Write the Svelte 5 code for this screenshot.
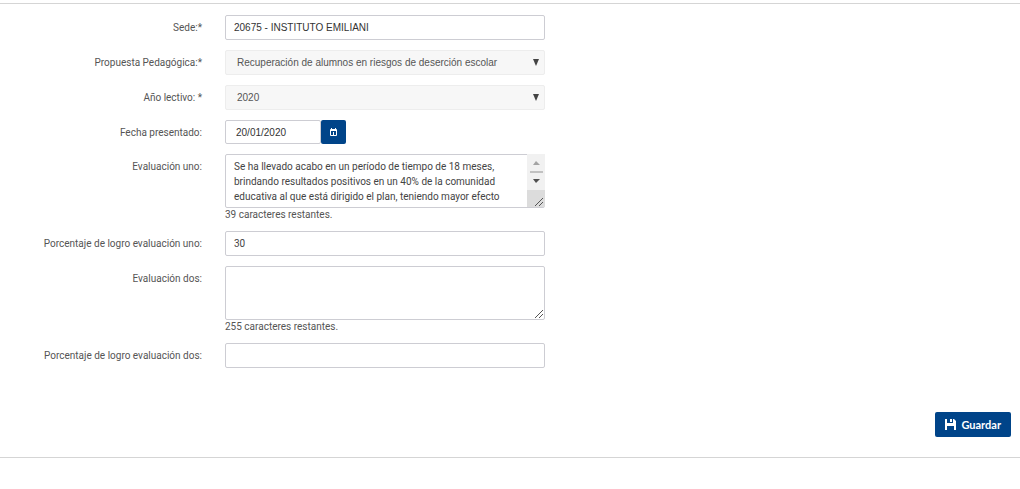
<script lang="ts">
  const MAX_LENGTH = 255;

  let sede = $state('20675 - INSTITUTO EMILIANI');
  let propuesta = $state('Recuperación de alumnos en riesgos de deserción escolar');
  let anio = $state('2020');
  let fecha = $state('20/01/2020');
  let evaluacionUno = $state(
    'Se ha llevado acabo en un período de tiempo de 18 meses, brindando resultados positivos en un 40% de la comunidad educativa al que está dirigido el plan, teniendo mayor efecto sobre los alumnos en riesgo de deserción'
  );
  let porcentajeUno = $state('30');
  let evaluacionDos = $state('');
  let porcentajeDos = $state('');

  let restantesUno = $derived(MAX_LENGTH - evaluacionUno.length);
  let restantesDos = $derived(MAX_LENGTH - evaluacionDos.length);
</script>

<form class="panel" onsubmit={(event) => event.preventDefault()}>
  <div class="fields">
    <label for="sede">Sede:*</label>
    <input id="sede" class="control plain" type="text" bind:value={sede} />

    <label for="propuesta">Propuesta Pedagógica:*</label>
    <div class="select">
      <select id="propuesta" class="control plain" bind:value={propuesta}>
        <option>Recuperación de alumnos en riesgos de deserción escolar</option>
      </select>
      <svg class="arrow" viewBox="0 0 6 7" aria-hidden="true"><path d="M0 0h6L3 7z" /></svg>
    </div>

    <label for="anio">Año lectivo: *</label>
    <div class="select">
      <select id="anio" class="control plain" bind:value={anio}>
        <option>2020</option>
      </select>
      <svg class="arrow" viewBox="0 0 6 7" aria-hidden="true"><path d="M0 0h6L3 7z" /></svg>
    </div>

    <label for="fecha">Fecha presentado:</label>
    <div class="date">
      <input id="fecha" class="control plain" type="text" bind:value={fecha} />
      <button type="button" class="pick" aria-label="Elegir fecha">
        <svg viewBox="0 0 7 8" aria-hidden="true">
          <path
            fill-rule="evenodd"
            d="M1 1V0h1v1h3V0h1v1q1 0 1 1v5q0 1-1 1H1Q0 8 0 7V2q0-1 1-1zM1 3v4h5V3z"
          />
          <path d="M3 4h1v3H3z" />
        </svg>
      </button>
    </div>

    <label for="evaluacion-uno">Evaluación uno:</label>
    <div>
      <div class="area scrolled">
        <textarea
          id="evaluacion-uno"
          class="control"
          maxlength={MAX_LENGTH}
          bind:value={evaluacionUno}
        ></textarea>
        <svg class="scroll" viewBox="0 0 18 54" aria-hidden="true">
          <path fill="#f1f1f1" d="M0 0h18v36H0z" />
          <path fill="#dcdcdc" d="M0 36h18v17H0z" />
          <path fill="#a3a3a3" d="M6 11h7L9 7z" />
          <path fill="#c1c1c1" d="M3 17h13v2H3z" />
          <path fill="#505050" d="M6 25h7l-4 4z" />
        </svg>
        <svg class="grip" viewBox="0 0 9 9" aria-hidden="true">
          <path d="M0 8l8-8M4 8l4-4" />
        </svg>
      </div>
      <div class="hint">{restantesUno} caracteres restantes.</div>
    </div>

    <label for="porcentaje-uno">Porcentaje de logro evaluación uno:</label>
    <input id="porcentaje-uno" class="control" type="text" bind:value={porcentajeUno} />

    <label for="evaluacion-dos">Evaluación dos:</label>
    <div>
      <div class="area">
        <textarea
          id="evaluacion-dos"
          class="control"
          maxlength={MAX_LENGTH}
          bind:value={evaluacionDos}
        ></textarea>
        <svg class="grip" viewBox="0 0 9 9" aria-hidden="true">
          <path d="M0 8l8-8M4 8l4-4" />
        </svg>
      </div>
      <div class="hint">{restantesDos} caracteres restantes.</div>
    </div>

    <label for="porcentaje-dos">Porcentaje de logro evaluación dos:</label>
    <input id="porcentaje-dos" class="control" type="text" bind:value={porcentajeDos} />
  </div>

  <div class="actions">
    <button type="submit" class="save">
      <svg viewBox="0 0 11 11" aria-hidden="true">
        <path d="M0 0h2v4h6V0h1l2 2v9H9V7H2v4H0zM5 0h2v3H5z" />
      </svg>
      Guardar
    </button>
  </div>
</form>

<style>
  :global(body) {
    background: #fff;
  }

  .panel {
    margin-top: 3px;
    padding: 11px 9px 20px 0;
    border-top: 1px solid #d5d5d5;
    border-bottom: 1px solid #d5d5d5;
    color: #555;
    font-family: Roboto, 'Liberation Sans', sans-serif;
    font-size: 10px;
    line-height: 15px;
  }

  .fields {
    display: grid;
    grid-template-columns: 202px minmax(0, 320px);
    column-gap: 23px;
    row-gap: 10px;
  }

  label {
    padding-top: 5px;
    text-align: right;
  }

  .control {
    display: block;
    box-sizing: border-box;
    width: 100%;
    height: 25px;
    margin: 0;
    padding: 0 8px;
    border: 1px solid #cdcdd3;
    border-radius: 2px;
    background: #fff;
    color: #444;
    font: inherit;
  }

  .plain {
    color: #333;
    font-family: 'Liberation Sans', Arial, sans-serif;
  }

  .control:focus-visible,
  button:focus-visible {
    outline: 1px solid #004489;
  }

  .select,
  .area {
    position: relative;
  }

  select.control {
    appearance: none;
    padding: 0 24px 0 11px;
    border-color: #ededed;
    background: #f7f7f7;
    color: #555;
  }

  .arrow {
    position: absolute;
    top: 9px;
    right: 6px;
    width: 6px;
    height: 7px;
    fill: #444;
    pointer-events: none;
  }

  .date {
    display: flex;
  }

  .date .control {
    width: 96px;
    height: 24px;
    padding: 0 10px;
  }

  button {
    display: flex;
    align-items: center;
    justify-content: center;
    border: 0;
    border-radius: 2px;
    background: #004489;
    color: #fff;
    cursor: pointer;
  }

  button svg {
    fill: currentColor;
  }

  .pick {
    width: 25px;
    height: 24px;
    padding: 0;
  }

  .pick svg {
    width: 7px;
    height: 8px;
  }

  textarea.control {
    height: 54px;
    padding-top: 4px;
    overflow: hidden;
    resize: none;
  }

  .scrolled textarea {
    padding-right: 26px;
  }

  .scroll {
    position: absolute;
    top: 0;
    right: 0;
    width: 18px;
    height: 54px;
    pointer-events: none;
  }

  .grip {
    position: absolute;
    right: 1px;
    bottom: 1px;
    width: 9px;
    height: 9px;
    fill: none;
    stroke: #555;
    pointer-events: none;
  }

  .hint {
    line-height: 13px;
  }

  .actions {
    display: flex;
    justify-content: flex-end;
    margin-top: 44px;
  }

  .save {
    gap: 5px;
    height: 25px;
    padding: 0 10px;
    font-family: Lato, 'Open Sans', sans-serif;
    font-size: 11px;
    font-weight: 700;
  }

  .save svg {
    width: 11px;
    height: 11px;
  }
</style>
